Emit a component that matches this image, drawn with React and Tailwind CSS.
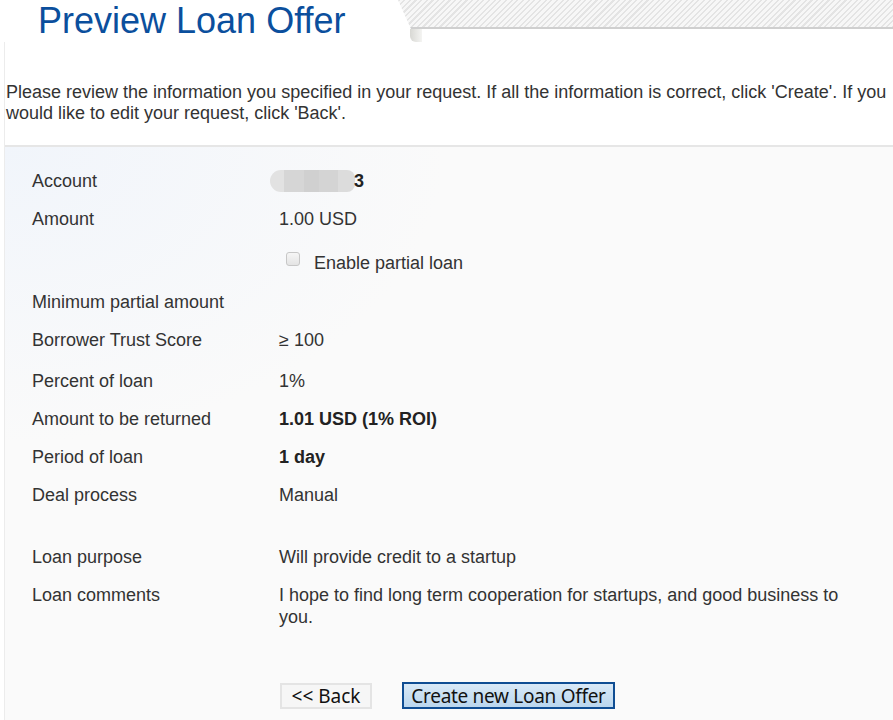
import React from "react";

function Row({ label, children, className = "" }) {
  return (
    <div className={`flex items-start py-[8px] text-[18px] leading-[22px] ${className}`}>
      <div className="w-[274px] shrink-0 pl-[27px] text-[#333]">{label}</div>
      <div className="w-[580px] text-[#333]">{children}</div>
    </div>
  );
}

export default function App() {
  return (
    <div className="w-[893px] h-[720px] overflow-hidden bg-white font-['Liberation_Sans',Arial,sans-serif]">
      {/* header */}
      <div className="flex h-[42px]">
        <div className="w-[398px] shrink-0 pl-[38px] text-[36px] leading-[42px] text-[#0b4f9d]">
          Preview Loan Offer
        </div>
        <div className="relative flex-1">
          <div className="h-[29px] border-b-2 border-[#cfcfcf] bg-[repeating-linear-gradient(135deg,#e4e4e4_0px,#e4e4e4_1.5px,#f7f7f7_1.5px,#f7f7f7_4px)] [clip-path:polygon(0_0,100%_0,100%_100%,13px_100%)]"></div>
          <div className="absolute left-[12px] top-[29px] h-[13px] w-[12px] rounded-bl-[6px] bg-gradient-to-r from-[#d8d8d4] to-[#f4f4f2]"></div>
        </div>
      </div>

      {/* body */}
      <div className="ml-[4px] border-l border-[#ececec] h-[678px]">
        <p className="pt-[40px] pl-[1px] pr-[4px] text-[18px] leading-[21px] text-[#333]">
          Please review the information you specified in your request. If all the information is correct, click 'Create'. If you would like to edit your request, click 'Back'.
        </p>

        <div className="mt-[21px] h-[600px] border-t-2 border-[#e6e6e6] bg-[#fafafa] bg-[radial-gradient(ellipse_at_top_left,#f1f5fb_0%,#fafafa_35%)] pt-[15px]">
          <Row label="Account">
            <div className="flex items-center">
              <div className="-ml-[9px] h-[22px] w-[85px] rounded-l-[11px] rounded-r-[8px] bg-[linear-gradient(90deg,#e2e2e2_0_16%,#d6d6d6_16%_40%,#d0d0d0_40%_58%,#d4d4d4_58%_80%,#dcdcdc_80%_100%)]"></div>
              <span className="font-bold text-[#222] -ml-[1px]">3</span>
            </div>
          </Row>
          <Row label="Amount">1.00 USD</Row>
          <div className="flex items-start py-[8px] mt-[6px] text-[18px] leading-[22px]">
            <div className="w-[274px] shrink-0"></div>
            <div className="flex items-center text-[#333]">
              <span className="ml-[7px] mr-[14px] -mt-[8px] inline-block h-[14px] w-[14px] rounded-[3px] border border-[#c7c7c7] bg-gradient-to-b from-[#f6f6f6] to-[#e4e4e4]"></span>
              Enable partial loan
            </div>
          </div>
          <Row label="Minimum partial amount" className="mt-[1px]"></Row>
          <Row label="Borrower Trust Score">≥ 100</Row>
          <Row label="Percent of loan" className="mt-[3px]">1%</Row>
          <Row label="Amount to be returned">
            <span className="font-bold text-[#222]">1.01 USD (1% ROI)</span>
          </Row>
          <Row label="Period of loan">
            <span className="font-bold text-[#222]">1 day</span>
          </Row>
          <Row label="Deal process">Manual</Row>
          <Row label="Loan purpose" className="mt-[24px]">Will provide credit to a startup</Row>
          <Row label="Loan comments">
            I hope to find long term cooperation for startups, and good business to you.
          </Row>

          <div className="mt-[46px] flex items-center pl-[275px] font-['Noto_Sans',sans-serif]">
            <button className="h-[26px] w-[92px] border-2 border-[#e4e4e4] bg-[#f6f6f6] text-[19px] leading-[20px] text-[#111]">
              &lt;&lt; Back
            </button>
            <button className="ml-[30px] h-[27px] w-[213px] border-2 border-[#0f4d93] bg-gradient-to-b from-[#d9e9f7] to-[#bad6ee] text-[19px] leading-[20px] text-[#111] tracking-[-0.3px]">
              Create new Loan Offer
            </button>
          </div>
        </div>
      </div>
    </div>
  );
}
